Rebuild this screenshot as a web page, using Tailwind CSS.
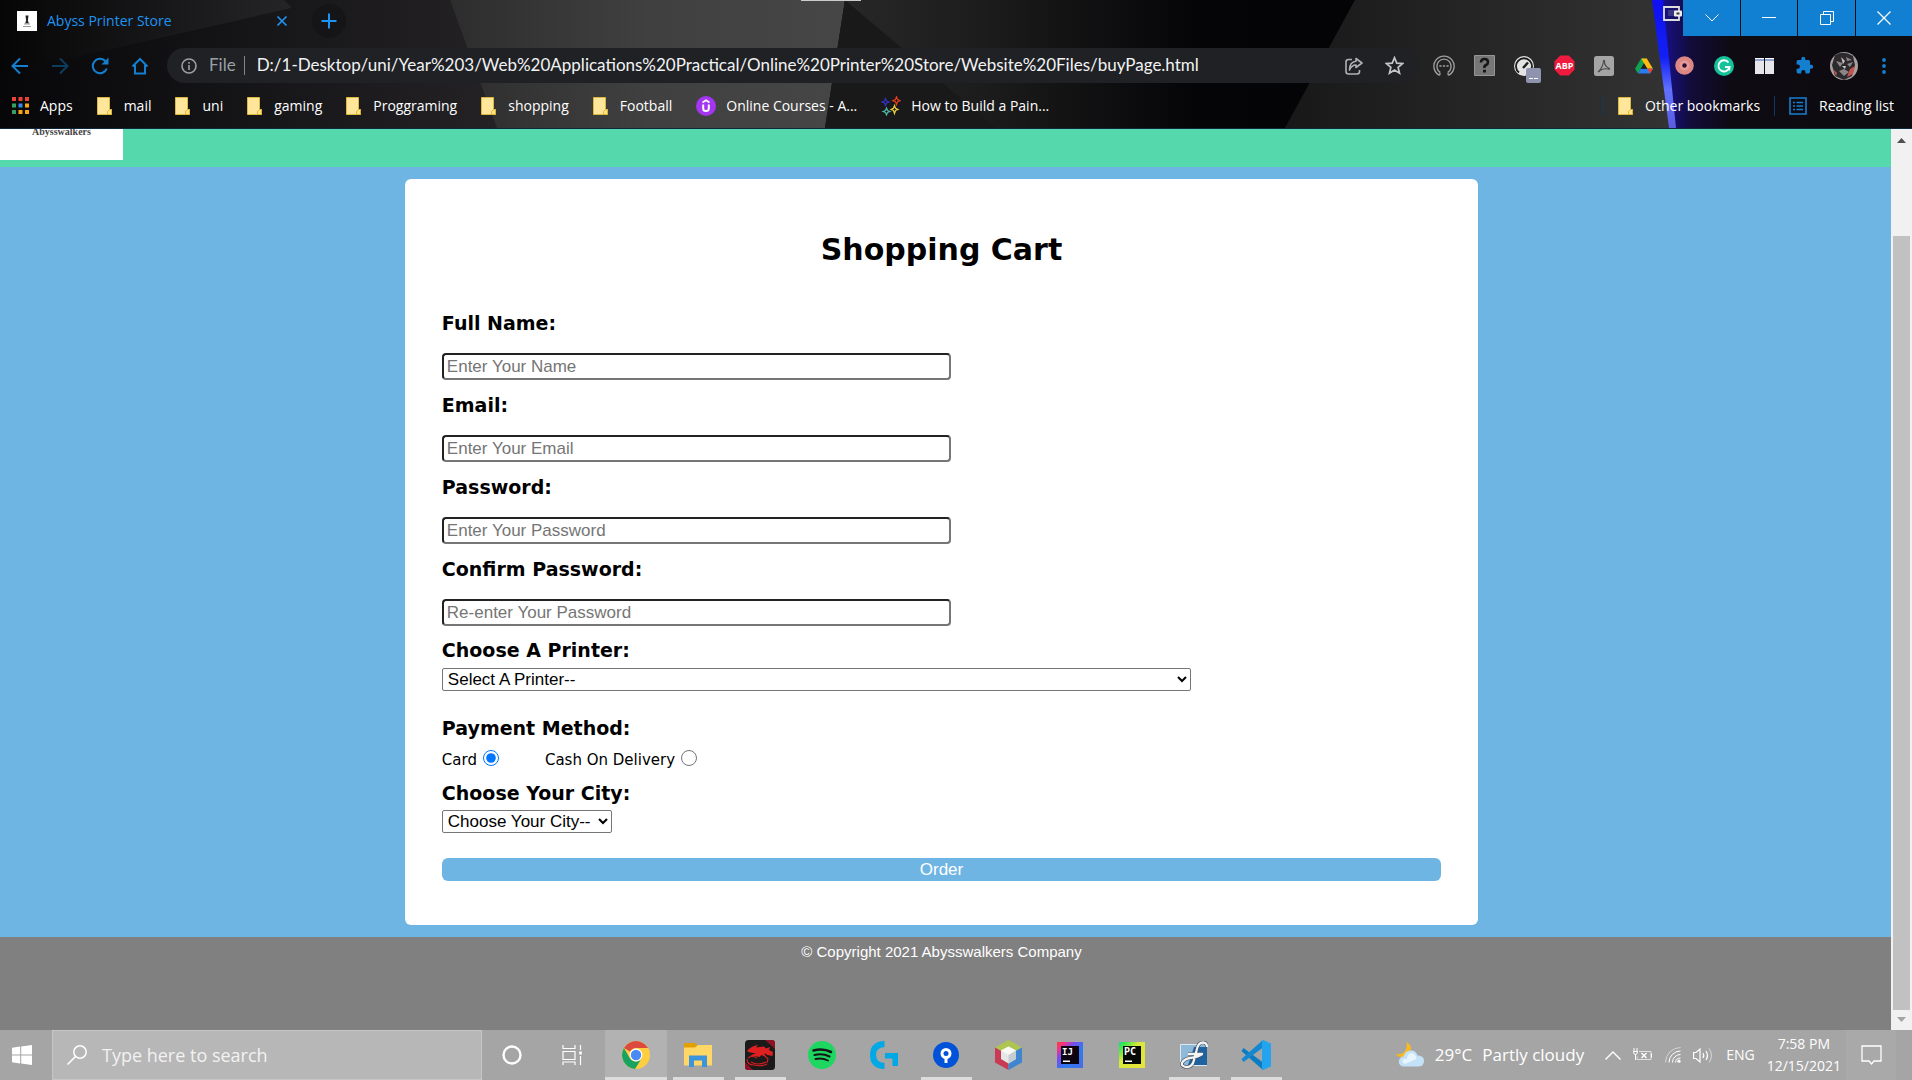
<!DOCTYPE html>
<html lang="en">
<head>
<meta charset="utf-8">
<title>Abyss Printer Store</title>
<script src="https://cdn.jsdelivr.net/npm/@tailwindcss/browser@4"></script>
</head>
<body class="flex min-h-screen flex-col bg-[#808080] font-['Open_Sans',sans-serif] text-sm text-white">

<svg class="hidden">
  <symbol id="folder" viewBox="0 0 15 18"><path d="M.5.5h12v12h2v5H.5z" fill="#ffe69a" stroke="#dcb93c"/><path d="M12.5 12.500l-2 2v3h4v-5z" fill="#ffe083" stroke="#d4ae2c" stroke-width=".8"/></symbol>
</svg>

<!-- Browser window frame -->
<header class="relative border-b border-[#0b2840] bg-[#070709]">
  <svg class="absolute inset-0 size-full" viewBox="0 0 1912 128" preserveAspectRatio="none" aria-hidden="true">
    <defs>
      <linearGradient id="g1"><stop offset="0" stop-color="#060607"/><stop offset="1" stop-color="#252527"/></linearGradient>
      <linearGradient id="g2"><stop offset="0" stop-color="#070709"/><stop offset="1" stop-color="#242225"/></linearGradient>
      <linearGradient id="g3"><stop offset="0" stop-color="#2d2d2e"/><stop offset=".5" stop-color="#404040"/><stop offset="1" stop-color="#464646"/></linearGradient>
      <linearGradient id="g4"><stop offset="0" stop-color="#292929"/><stop offset=".3" stop-color="#1c1c1c"/><stop offset=".7" stop-color="#050407"/><stop offset="1" stop-color="#040306"/></linearGradient>
      <linearGradient id="g5"><stop offset="0" stop-color="#181818"/><stop offset="1" stop-color="#333333"/></linearGradient>
      <linearGradient id="g6"><stop offset="0" stop-color="#1a12a0"/><stop offset=".14" stop-color="#120c3a"/><stop offset=".3" stop-color="#0e0b12"/><stop offset="1" stop-color="#0c0b0f"/></linearGradient>
      <linearGradient id="g7" x2="0" y2="1"><stop offset="0" stop-color="#1010f0"/><stop offset=".45" stop-color="#1220f4"/><stop offset=".7" stop-color="#6070ff"/><stop offset="1" stop-color="#5a5ce0"/></linearGradient>
    </defs>
    <path d="M0 72L292 8L278 0H450L500 128H0z" fill="url(#g2)"/>
    <path d="M0 0H284L292 8L0 74z" fill="url(#g1)"/>
    <path d="M450 0H845L825 128H497z" fill="url(#g3)"/>
    <path d="M845 0H1355L1285 128H825z" fill="url(#g4)"/>
    <path d="M845 0L996 128H825z" fill="#191919"/>
    <path d="M1355 0H1660L1672 128H1285z" fill="url(#g5)"/>
    <path d="M1655 0H1912V128H1672z" fill="url(#g6)"/>
    <path d="M1652 0H1663L1676 128H1669z" fill="url(#g7)"/>
    <path d="M801 0h60v1h-60z" fill="#c8cdcb"/>
  </svg>

  <div class="relative flex h-11 items-start">
    <div class="flex h-[42px] w-[302px] items-center pl-[17px]">
      <svg class="size-5" viewBox="0 0 20 20"><path d="M0 0h20v20H0z" fill="#fff"/><path d="M8.500 4.500h3l-.6 5 1 3H8.100l1-3z" fill="#222"/><path d="M7 13h6M6 15.500h8" stroke="#999"/></svg>
      <span class="ml-2.5 flex-1 text-[#1d94f3]">Abyss Printer Store</span>
      <button class="mr-3 p-0.5" aria-label="Close tab"><svg class="size-3" viewBox="0 0 12 12" stroke="#1d94f3" stroke-width="1.700"><path d="M1.500 1.500l9 9M10.500 1.500l-9 9"/></svg></button>
    </div>
    <button class="mt-1 ml-2.5 flex size-[34px] items-center justify-center rounded-full bg-[#151518]" aria-label="New tab"><svg class="size-4" viewBox="0 0 16 16" stroke="#1d94f3" stroke-width="2"><path d="M8 0.500v15M.5 8h15"/></svg></button>
    <svg class="ml-auto mt-1.5 h-4 w-5" viewBox="0 0 20 16" fill="none"><path d="M1 1h15v13H1z" stroke="#ddd" stroke-width="1.800"/><path d="M5 4h9v6H5z" fill="#3a3580"/><rect x="11" y="4.500" width="8" height="6" rx="1" fill="#eee"/><path d="M13.500 6.500h3v2h-3z" fill="#333"/></svg>
    <div class="flex h-9 gap-px">
      <button class="flex w-[57px] items-center justify-center bg-[#1280d2]" aria-label="Tab search"><svg class="h-2 w-[14px]" viewBox="0 0 14 8" fill="none" stroke="#fff"><path d="M.5.5L7 7l6.500-6.500"/></svg></button>
      <button class="flex w-14 items-center justify-center bg-[#1280d2]" aria-label="Minimize"><svg class="h-1 w-[14px]" viewBox="0 0 14 4"><path d="M0 1h14v1H0z" fill="#fff"/></svg></button>
      <button class="flex w-[57px] items-center justify-center bg-[#1280d2]" aria-label="Restore"><svg class="size-[14px]" viewBox="0 0 14 14" fill="none" stroke="#fff"><path d="M.5 3.500h10v10H.5zM3.500 3V.5h10v10H11"/></svg></button>
      <button class="flex w-14 items-center justify-center bg-[#1280d2]" aria-label="Close window"><svg class="size-[14px]" viewBox="0 0 14 14" stroke="#fff" stroke-width="1.200"><path d="M.5.5l13 13M13.500.5l-13 13"/></svg></button>
    </div>
  </div>

  <div class="relative flex h-[43px] items-center pr-2">
    <nav class="flex" aria-label="Browser">
      <button class="flex w-10 justify-center" aria-label="Back"><svg class="size-[18px]" viewBox="0 0 18 18" fill="none" stroke="#147fd0" stroke-width="2"><path d="M17 9H2M9 1.500L1.500 9 9 16.500"/></svg></button>
      <button class="flex w-10 justify-center" aria-label="Forward"><svg class="size-[18px]" viewBox="0 0 18 18" fill="none" stroke="#0d3c61" stroke-width="2"><path d="M1 9h15M9 1.500L16.500 9 9 16.500"/></svg></button>
      <button class="flex w-10 justify-center" aria-label="Reload"><svg class="size-[18px]" viewBox="0 0 18 18" fill="none" stroke="#147fd0" stroke-width="2"><path d="M15.800 11.500A7.200 7.200 0 1 1 14 3.800l2 2"/><path d="M17.500.5v7h-7z" fill="#147fd0" stroke="none"/></svg></button>
      <button class="flex w-10 justify-center" aria-label="Home"><svg class="size-[18px]" viewBox="0 0 18 18" fill="none" stroke="#147fd0" stroke-width="2"><path d="M1.500 9.500L9 2l7.500 7.500M4 8v8.500h10V8"/></svg></button>
    </nav>
    <div class="ml-[7px] mr-1.5 flex h-[35px] flex-1 items-center rounded-full bg-[#202124] pl-3.5">
      <svg class="size-4" viewBox="0 0 16 16" fill="none" stroke="#9aa0a6" stroke-width="1.600"><circle cx="8" cy="8" r="7"/><path d="M8 7v5M8 4v1.800"/></svg>
      <span class="ml-3 font-['Lato',sans-serif] text-[17px] text-[#9aa0a6]">File</span>
      <span class="ml-2 h-[19px] w-px bg-[#80868b]"></span>
      <input class="ml-3 flex-1 bg-transparent font-['Lato',sans-serif] text-[17px] text-[#f1f3f4] outline-none" aria-label="Address" value="D:/1-Desktop/uni/Year%203/Web%20Applications%20Practical/Online%20Printer%20Store/Website%20Files/buyPage.html">
      <button class="flex w-10 justify-center" aria-label="Share"><svg class="size-[18px]" viewBox="0 0 18 18" fill="none" stroke="#aeb2b6" stroke-width="1.600" stroke-linejoin="round"><path d="M7 2.500H3.500Q1 2.500 1 5v9.500Q1 17 3.500 17h8.500q2.500 0 2.500-2.500V13"/><path d="M11 1.500l6 4.500-6 4.500V8Q6.500 8 4.500 13 4.500 5 11 4.200z"/></svg></button>
      <button class="mr-1 flex w-10 justify-center" aria-label="Bookmark"><svg class="size-[19px]" viewBox="0 0 20 20" fill="none" stroke="#c3c6c9" stroke-width="1.800"><path d="M10 1.800l2.400 5.700 6.100.5-4.700 4 1.500 6.100L10 14.800l-5.300 3.300L6.200 12 1.500 8l6.100-.5z"/></svg></button>
    </div>
    <div class="flex items-center">
      <button class="flex w-10 justify-center" aria-label="Recorder"><svg class="size-[22px]" viewBox="0 0 20 20" fill="none" stroke="#a0a0a0" stroke-width="1.200"><path d="M6 18.500A9.200 9.200 0 1 1 14 18.500"/><path d="M6.500 16l-.5 2.500M13.500 16l.5 2.500M6.500 15.800a6.500 6.500 0 1 1 7 0"/><path d="M5.800 10h2M9 10h2M12.200 10h2"/></svg></button>
      <button class="flex w-10 justify-center" aria-label="Unknown extension"><svg class="size-[21px]" viewBox="0 0 21 21"><path d="M.5.5h20v20H.5z" fill="#777" stroke="#959595"/><path d="M7 7.500Q7 4 10.500 4T14 7.200Q14 9 12 10t-1.500 3" fill="none" stroke="#161616" stroke-width="2.600"/><path d="M9 14.800h3v2.700H9z" fill="#161616"/></svg></button>
      <button class="relative flex w-10 justify-center" aria-label="Speed test"><svg class="size-5" viewBox="0 0 20 20"><circle cx="10" cy="10" r="10" fill="#e4e4e4"/><path d="M5 16.500a8 8 0 1 1 10 0" fill="none" stroke="#1c1c1c" stroke-width="1.800"/><path d="M9 12l5-5.500" stroke="#1c1c1c" stroke-width="2.400"/></svg><span class="absolute top-3 left-[22px] flex h-[15px] w-[15px] items-end justify-center gap-px rounded-xs bg-[#8f93ad] pb-1"><i class="h-px w-1 bg-white"></i><i class="h-px w-1 bg-white"></i></span></button>
      <button class="flex w-10 justify-center" aria-label="Adblock Plus"><svg class="size-[21px]" viewBox="0 0 21 21"><path d="M6.200.5h8.600l5.700 5.700v8.600l-5.700 5.700H6.200L.5 14.800V6.200z" fill="#ee1b3f"/><text x="10.500" y="14" text-anchor="middle" font-family="Open Sans" font-weight="700" font-size="9" fill="#fff">ABP</text></svg></button>
      <button class="flex w-10 justify-center" aria-label="Acrobat"><svg class="size-5" viewBox="0 0 20 20"><rect width="20" height="20" rx="2.500" fill="#a5a5a5"/><path d="M4.500 15.500Q9 11 9.500 5q.5-1.500 1 0Q10 10 15.500 12.500q.5 1-1.500.5-5-1-8 1.500-1 1.500-1.500 1z" fill="none" stroke="#4a4a4a" stroke-width="1.100"/></svg></button>
      <button class="flex w-10 justify-center" aria-label="Google Drive"><svg class="size-[18px]" viewBox="0 0 18 16"><path d="M6.200.5h5.600L6 10.500l-3 5L0 10.700z" fill="#12a350"/><path d="M6.200.5h5.600L18 10.700h-5.700z" fill="#ffbc10"/><path d="M5.800 10.700H18L15 15.500H3z" fill="#2a7cf0"/><path d="M9 5.500l3.200 5.200H5.900z" fill="#202024"/><path d="M12.300 10.700H18L15 15.500z" fill="#e94335"/></svg></button>
      <button class="flex w-10 justify-center" aria-label="Screen recorder"><svg class="size-[19px]" viewBox="0 0 19 19"><circle cx="9.500" cy="9.500" r="9.300" fill="#dd8785"/><circle cx="9.500" cy="9.500" r="5" fill="#e89a98"/><circle cx="9.500" cy="9.500" r="2.200" fill="#2a1030"/></svg></button>
      <button class="flex w-10 justify-center" aria-label="Grammarly"><svg class="size-5" viewBox="0 0 20 20" fill="none"><circle cx="10" cy="10" r="10" fill="#14c39a"/><path d="M14.500 6.500A5.600 5.600 0 1 0 15.500 11H11" stroke="#fff" stroke-width="1.800"/><path d="M13 11.500h2.500v3" stroke="#fff" stroke-width="1.500"/></svg></button>
      <button class="flex w-10 justify-center" aria-label="Tab split"><svg class="h-4 w-[19px]" viewBox="0 0 19 16"><path d="M0 0h9v16H0zM10 0h9v16h-9z" fill="#e6e6ea"/><path d="M0 0h9v3H0zM10 0h9v3h-9z" fill="#8fa3cf"/><path d="M0 0h9v1H0zM10 0h9v1h-9z" fill="#fff"/></svg></button>
      <button class="flex w-10 justify-center" aria-label="Extensions"><svg class="size-[19px]" viewBox="0 0 24 24" fill="#147fd0"><path d="M20.500 11H19V7a2 2 0 0 0-2-2h-4V3.500a2.500 2.500 0 0 0-5 0V5H4a2 2 0 0 0-2 2v3.800h1.500a2.700 2.700 0 0 1 0 5.400H2V20a2 2 0 0 0 2 2h3.800v-1.500a2.700 2.700 0 0 1 5.400 0V22H17a2 2 0 0 0 2-2v-4h1.500a2.500 2.500 0 0 0 0-5z"/></svg></button>
      <button class="flex w-10 justify-center" aria-label="Profile"><svg class="size-7" viewBox="0 0 28 28"><defs><clipPath id="av"><circle cx="14" cy="14" r="14"/></clipPath></defs><g clip-path="url(#av)"><path d="M0 0h28v28H0z" fill="#a9a19f"/><path d="M5 3q9-5 18 1l2 9-3 11-8 4-9-4-3-11z" fill="#2b2a2e"/><path d="M6 9l7 2-3 4zM16 5l6 3-5 1zM17 12l6-2-3 5zM9 19l5-2 5 3-5 4z" fill="#8d8685"/><path d="M11 5l4 4-2 3zM12 14l4 0-1 3z" fill="#c9c3c0"/><path d="M20 17l5-3-2 8-6 3zM3 17l4 4-1 3z" fill="#c5534f"/></g></svg></button>
      <button class="flex w-10 justify-center" aria-label="Menu"><svg class="h-4 w-1" viewBox="0 0 4 16" fill="#147fd0"><circle cx="2" cy="2" r="1.900"/><circle cx="2" cy="8" r="1.900"/><circle cx="2" cy="14" r="1.900"/></svg></button>
    </div>
  </div>

  <nav class="relative flex h-[41px] items-center pr-[18px] pb-1 pl-3" aria-label="Bookmarks">
    <div class="flex flex-1 items-center gap-6">
      <a href="#" class="flex items-center gap-[11px]"><svg class="size-[17px]" viewBox="0 0 17 17"><path d="M0 0h4v4H0zM6.500 0h4v4h-4zM13 0h4v4h-4z" fill="#ea4335"/><path d="M0 6.500h4v4H0zM0 13h4v4H0z" fill="#34a162"/><path d="M6.500 6.500h4v4h-4z" fill="#2d8cf0"/><path d="M13 6.500h4v4h-4zM6.500 13h4v4h-4zM13 13h4v4h-4z" fill="#f9a510"/></svg>Apps</a>
      <a href="#" class="flex items-center gap-3"><svg class="h-[18px] w-[15px]"><use href="#folder"/></svg>mail</a>
      <a href="#" class="flex items-center gap-3"><svg class="h-[18px] w-[15px]"><use href="#folder"/></svg>uni</a>
      <a href="#" class="flex items-center gap-3"><svg class="h-[18px] w-[15px]"><use href="#folder"/></svg>gaming</a>
      <a href="#" class="flex items-center gap-3"><svg class="h-[18px] w-[15px]"><use href="#folder"/></svg>Proggraming</a>
      <a href="#" class="flex items-center gap-3"><svg class="h-[18px] w-[15px]"><use href="#folder"/></svg>shopping</a>
      <a href="#" class="flex items-center gap-3"><svg class="h-[18px] w-[15px]"><use href="#folder"/></svg>Football</a>
      <a href="#" class="flex items-center gap-2.5"><svg class="size-5" viewBox="0 0 20 20" fill="none" stroke="#fff"><circle cx="10" cy="10" r="10" fill="#a435f0" stroke="none"/><path d="M7.200 8.500v4q0 2.500 2.800 2.500t2.800-2.500v-4" stroke-width="2"/><path d="M6.500 6.500L10 4.200l3.500 2.300" stroke-width="1.700"/></svg>Online Courses - A...</a>
      <a href="#" class="flex items-center gap-2.5"><svg class="size-5" viewBox="0 0 20 20" fill="none" stroke-width="1.200"><path d="M4.500 2.500l1 2.500 2.500 1-2.500 1-1 2.500-1-2.500L1 6l2.500-1z" stroke="#3430c8"/><path d="M15.500.8l1 2.700 2.700 1.200-2.700 1-1 3-1-3-2.700-1 2.700-1.200z" stroke="#e8401c"/><path d="M5.500 12l1 2.500L9 15.500l-2.500 1-1 2.500-1-2.500-2.500-1 2.500-1z" stroke="#4fb5a5"/><path d="M13.500 9.500l1 2.800 2.500 1.200-2.500 1-1 3-1-3-2.500-1 2.500-1.200z" stroke="#f0cf3c"/></svg>How to Build a Pain...</a>
    </div>
    <a href="#" class="flex items-center gap-3 border-l border-[#123a5c] pl-[15px]"><svg class="h-[18px] w-[15px]"><use href="#folder"/></svg>Other bookmarks</a>
    <a href="#" class="ml-3.5 flex items-center gap-3 border-l border-[#123a5c] pl-3.5"><svg class="size-[18px]" viewBox="0 0 18 18" fill="none" stroke="#147fd0" stroke-width="1.600"><path d="M1 1h16v16H1z"/><path d="M4 5.500h2M7.500 5.500H14M4 9h2M7.500 9H14M4 12.500h2M7.500 12.500H14"/></svg>Reading list</a>
  </nav>
</header>

<!-- Page viewport with its scrollbar -->
<div class="flex flex-1">
  <div class="flex flex-1 flex-col font-['Liberation_Sans',Arial,sans-serif]">
    <div class="h-[38px] bg-[#55d8ab]">
      <a href="#" class="block h-[31px] w-[123px] bg-white text-center font-['Liberation_Serif',serif] text-[10px] leading-[6px] font-bold text-[#444]">Abysswalkers</a>
    </div>
    <main class="bg-[#6fb5e4] py-3 pr-2">
      <form class="mx-auto flex w-[57%] flex-col rounded-md bg-white px-[37px] pt-[51px] pb-11 font-['DejaVu_Sans',Verdana,sans-serif] text-black">
        <h1 class="text-center text-[30px] leading-10 font-bold">Shopping Cart</h1>
        <label for="name" class="mt-[41px] text-[19px] leading-6 font-bold">Full Name:</label>
        <input id="name" type="text" placeholder="Enter Your Name" class="mt-[18px] h-[27px] w-[51%] rounded-sm border-2 border-t-[#222] border-r-[#767676] border-b-[#767676] border-l-[#222] px-[3px] font-['Liberation_Sans',Arial,sans-serif] text-[17px] placeholder:text-[#757575]">
        <label for="email" class="mt-[13px] text-[19px] leading-6 font-bold">Email:</label>
        <input id="email" type="email" placeholder="Enter Your Email" class="mt-[18px] h-[27px] w-[51%] rounded-sm border-2 border-t-[#222] border-r-[#767676] border-b-[#767676] border-l-[#222] px-[3px] font-['Liberation_Sans',Arial,sans-serif] text-[17px] placeholder:text-[#757575]">
        <label for="pass" class="mt-[13px] text-[19px] leading-6 font-bold">Password:</label>
        <input id="pass" type="password" placeholder="Enter Your Password" class="mt-[18px] h-[27px] w-[51%] rounded-sm border-2 border-t-[#222] border-r-[#767676] border-b-[#767676] border-l-[#222] px-[3px] font-['Liberation_Sans',Arial,sans-serif] text-[17px] placeholder:text-[#757575]">
        <label for="confirm" class="mt-[13px] text-[19px] leading-6 font-bold">Confirm Password:</label>
        <input id="confirm" type="password" placeholder="Re-enter Your Password" class="mt-[18px] h-[27px] w-[51%] rounded-sm border-2 border-t-[#222] border-r-[#767676] border-b-[#767676] border-l-[#222] px-[3px] font-['Liberation_Sans',Arial,sans-serif] text-[17px] placeholder:text-[#757575]">
        <label for="printer" class="mt-3 text-[19px] leading-6 font-bold">Choose A Printer:</label>
        <select id="printer" class="mt-1.5 h-[23px] w-3/4 rounded-xs border border-[#767676] bg-white px-px font-['Liberation_Sans',Arial,sans-serif] text-[17px] leading-5"><option>Select A Printer--</option></select>
        <fieldset class="mt-[25px]">
          <legend class="text-[19px] leading-6 font-bold">Payment Method:</legend>
          <div class="flex h-[41px] items-center gap-[46px] text-[15px]">
            <label class="flex items-center gap-1.5">Card <input type="radio" name="pay" checked class="mb-1.5 size-4"></label>
            <label class="flex items-center gap-1.5">Cash On Delivery <input type="radio" name="pay" class="mb-1.5 size-4"></label>
          </div>
        </fieldset>
        <label for="city" class="text-[19px] leading-6 font-bold">Choose Your City:</label>
        <select id="city" class="mt-[5px] h-[23px] w-[17%] rounded-xs border border-[#767676] bg-white pl-px font-['Liberation_Sans',Arial,sans-serif] text-[17px] leading-5"><option>Choose Your City--</option></select>
        <button type="button" class="mt-[25px] h-[23px] rounded-md bg-[#6fb5e4] font-['Liberation_Sans',Arial,sans-serif] text-[17px] leading-[23px] text-white">Order</button>
      </form>
    </main>
    <footer class="flex-1 bg-[#808080] pt-1 pr-2 text-center text-[15px] leading-[22px]">© Copyright 2021 Abysswalkers Company</footer>
  </div>
  <div class="flex w-[21px] flex-col items-center bg-[#f1f1f1]" aria-hidden="true">
    <svg class="mt-[9px] mb-[93px] h-[5px] w-[9px]" viewBox="0 0 9 5"><path d="M4.500 0L9 5H0z" fill="#505050"/></svg>
    <div class="w-[17px] flex-1 bg-[#c1c1c1]"></div>
    <svg class="mt-[7px] mb-2 h-[5px] w-[9px]" viewBox="0 0 9 5"><path d="M0 0h9L4.500 5z" fill="#a3a3a3"/></svg>
  </div>
</div>

<!-- Windows taskbar -->
<footer class="flex h-[50px] items-stretch bg-[#a5a5a5]">
  <button class="flex w-[52px] items-center pl-3" aria-label="Start"><svg class="size-5" viewBox="0 0 20 20" fill="#fff"><path d="M0 2.800L8.200 1.600v7.900H0zM9.200 1.500L20 0v9.500H9.200zM0 10.500h8.200v7.900L0 17.200zM9.200 10.500H20V20L9.200 18.500z"/></svg></button>
  <label class="flex w-[430px] items-center border border-[#c6c6c6] bg-[#b7b7b7] pl-3.5">
    <svg class="size-5" viewBox="0 0 20 20" fill="none" stroke="#fff" stroke-width="1.500"><circle cx="13" cy="7" r="6.200"/><path d="M8.600 11.400L.5 19.500"/></svg>
    <input type="text" aria-label="Search" placeholder="Type here to search" class="ml-[15px] flex-1 bg-transparent text-lg outline-none placeholder:text-[#f2f2f2]">
  </label>
  <button class="flex w-[60px] items-center justify-center" aria-label="Cortana"><svg class="size-5" viewBox="0 0 20 20" fill="none" stroke="#fff" stroke-width="2.400"><circle cx="10" cy="10" r="8.500"/></svg></button>
  <button class="flex w-[63px] items-center justify-center pr-1" aria-label="Task view"><svg class="size-5" viewBox="0 0 20 20" fill="none" stroke="#fff" stroke-width="1.200"><path d="M1 0v3.500h12V0M1 6.500h12v8H1zM1 20v-3h12v3M18.500 0v5M18.500 11v9"/><path d="M17.200 6.500h2.600v3h-2.600z" fill="#fff" stroke="none"/></svg></button>
  <button class="flex w-[62px] items-center justify-center border-b-[3px] border-[#dcdcdc] bg-[#b2b2b2] pt-[3px]" aria-label="Chrome"><svg class="size-7" viewBox="0 0 28 28"><circle cx="14" cy="14" r="14" fill="#ffcd40"/><path d="M1.900 7a14 14 0 0 1 24.200 0H14a7 7 0 0 0-6 3.500z" fill="#dc4a3f"/><path d="M1.900 7A14 14 0 0 0 13 28l6.500-10.500A7 7 0 0 1 8 17.500z" fill="#1aa260"/><circle cx="14" cy="14" r="6.400" fill="#fff"/><circle cx="14" cy="14" r="5.200" fill="#4a8af4"/></svg></button>
  <button class="flex w-[62px] justify-center" aria-label="File Explorer"><span class="flex w-[51px] items-center justify-center border-b-[3px] border-[#dcdcdc] pt-[3px]"><svg class="h-6 w-7" viewBox="0 0 28 24"><path d="M0 0h11l2 2v4H0z" fill="#e2a000"/><path d="M0 4.500h11L14 2h14v20.500H0z" fill="#ffd766"/><path d="M5 24V12.500h18V24h-5v-6.500h-8V24z" fill="#3b94dc"/></svg></span></button>
  <button class="flex w-[62px] justify-center" aria-label="Dragon Center"><span class="flex w-[51px] items-center justify-center border-b-[3px] border-[#dcdcdc] pt-[3px]"><svg class="size-[30px]" viewBox="0 0 30 30"><rect width="30" height="30" rx="3.500" fill="#1a1a1b"/><path d="M20 0h7q3 0 3 3v6zM0 22l8 8H3q-3 0-3-3z" fill="#8d1226"/><path d="M2 11q4-5 11-6l-2 2.500 8-1 2 2 4-1.500-1 3 4 2-.5 4-5-1-3-2 1 4-4-2-2 2q-6-1.500-11 .5 4-4 8-4l-6-1q-2-.5-3.500-1.500z" fill="#e02020"/><path d="M2 19q0 6 7 6M3 18q4-3 9 0M6 22q7 4 15 0M9 25q7 2 13-1M20 16l3 3-1 4" fill="none" stroke="#d81e1e" stroke-width="1.100"/></svg></span></button>
  <button class="flex w-[62px] items-center justify-center" aria-label="Spotify"><svg class="size-7" viewBox="0 0 28 28" fill="none" stroke="#151515" stroke-linecap="round"><circle cx="14" cy="14" r="14" fill="#1ed760" stroke="none"/><path d="M5.500 9.500q9.500-2.500 17.500 1.500" stroke-width="2.600"/><path d="M6.500 14q8-2 15 1.500" stroke-width="2.200"/><path d="M7.500 18q6.500-1.500 12.500 1.500" stroke-width="1.800"/></svg></button>
  <button class="flex w-[62px] items-center justify-center" aria-label="Logitech G HUB"><svg class="size-7" viewBox="0 0 28 28"><path d="M14.500 0v6q-8.500.5-8.500 8t8.500 8v6Q0 27.500 0 14T14.500 0zM15 12h13v13h-5.500v-7.500H15z" fill="#00a8e6"/></svg></button>
  <button class="flex w-[62px] justify-center" aria-label="Sourcetree"><span class="flex w-[51px] items-center justify-center border-b-[3px] border-[#dcdcdc] pt-[3px]"><svg class="size-[26px]" viewBox="0 0 26 26"><circle cx="13" cy="13" r="13" fill="#0052d8"/><circle cx="13" cy="11.500" r="4" fill="none" stroke="#fff" stroke-width="3"/><path d="M11.500 16h3v5h-3z" fill="#fff"/></svg></span></button>
  <button class="flex w-[62px] items-center justify-center" aria-label="NetBeans"><svg class="h-[30px] w-[27px]" viewBox="0 0 27 30"><path d="M13.500 0L27 7.500 13.500 15 0 7.500z" fill="#aec650"/><path d="M0 7.500L13.500 15v15L0 22.500z" fill="#c93a55"/><path d="M27 7.500L13.500 15v15L27 22.500z" fill="#3f86d0"/><path d="M13.500 6.500l7.500 4v8.500l-7.500 4.500L6 19v-8.500z" fill="#e4e8e4"/><path d="M13.500 6.500l7.500 4-7.500 4.500L6 10.500z" fill="#fafaf4"/><path d="M13.500 15v8.500L21 19v-8.500z" fill="#c5ccd2"/></svg></button>
  <button class="flex w-[62px] items-center justify-center" aria-label="IntelliJ IDEA"><svg class="size-[26px]" viewBox="0 0 26 26"><defs><linearGradient id="ij" x2="1" y2="1"><stop offset="0" stop-color="#fc3f3a"/><stop offset=".15" stop-color="#f8327e"/><stop offset=".35" stop-color="#7a4cf0"/><stop offset=".6" stop-color="#2d7cf0"/><stop offset="1" stop-color="#4a6ae8"/></linearGradient></defs><path d="M0 0h26v26H0z" fill="url(#ij)"/><path d="M4 4h18v18H4z" fill="#0c0410"/><text x="5" y="13" font-family="DejaVu Sans Mono" font-weight="700" font-size="9" fill="#fff">IJ</text><path d="M6 18.500h7V20H6z" fill="#fff"/></svg></button>
  <button class="flex w-[62px] items-center justify-center" aria-label="PyCharm"><svg class="size-[26px]" viewBox="0 0 26 26"><defs><linearGradient id="pc" x2="1" y2="1"><stop offset="0" stop-color="#21d789"/><stop offset=".15" stop-color="#3ee84a"/><stop offset=".4" stop-color="#d8e83c"/><stop offset="1" stop-color="#e8e43a"/></linearGradient></defs><path d="M0 0h26v26H0z" fill="url(#pc)"/><path d="M4 4h18v18H4z" fill="#060a06"/><text x="5" y="13" font-family="DejaVu Sans Mono" font-weight="700" font-size="10" fill="#fff">PC</text><path d="M6 18.500h7V20H6z" fill="#fff"/></svg></button>
  <button class="flex w-[62px] justify-center" aria-label="Font viewer"><span class="flex w-[51px] items-center justify-center border-b-[3px] border-[#dcdcdc] pt-[3px]"><svg class="size-7" viewBox="0 0 28 28" fill="none"><path d="M.5 3.500h26v21H.5z" fill="#8fb9d8" stroke="#dce8f0"/><path d="M14 6h13v18H8z" fill="#1f62a0"/><path d="M27 6Q27 1.500 23 1.500q-5 0-6.500 8L14 19q-1.500 7.500-8 7-5-1-4-4 2-4 8-5 8-1 12-4M8 13h15" stroke="#3c4a58" stroke-width="3.600"/><path d="M27 6Q27 1.500 23 1.500q-5 0-6.500 8L14 19q-1.500 7.500-8 7-5-1-4-4 2-4 8-5 8-1 12-4M8 13h15" stroke="#f4f4f4" stroke-width="2.300"/></svg></span></button>
  <button class="flex w-[62px] justify-center" aria-label="Visual Studio Code"><span class="flex w-[51px] items-center justify-center border-b-[3px] border-[#dcdcdc] pt-[3px]"><svg class="size-[30px]" viewBox="0 0 30 30"><path d="M2.500 8L22 22.500V30L.5 11z" fill="#0a7cc4"/><path d="M2.500 22L22 7.500V0L.5 19z" fill="#1388d0"/><path d="M22 0l8 3.500v23L22 30l-1-1V1z" fill="#23a4ee"/></svg></span></button>

  <div class="ml-auto flex items-center pr-4">
    <svg class="h-[26px] w-7" viewBox="0 0 28 26"><path d="M10.500 0q4 2 4.500 6.500l-2 6.500-7 2Q1 15 0 12q6 1 9-3 2.500-4 1.500-9z" fill="#fbb91e"/><path d="M8 24.500a5 5 0 0 1-.5-10Q9 8.500 15 8.500q5 0 6.500 5Q28 13.500 28 19t-6 5.500z" fill="#c3e2f7"/><path d="M9 22q-3.500-1-2-4.500 2-1.500 4 0Q11 11 16 11q4 1 4.500 6" fill="#e8f5fd"/></svg>
    <span class="ml-[11px] text-[17px]">29°C</span>
    <span class="ml-2.5 text-[17px]">Partly cloudy</span>
    <button class="ml-[21px] flex" aria-label="Hidden icons"><svg class="h-[9px] w-4" viewBox="0 0 16 9" fill="none" stroke="#fff" stroke-width="1.400"><path d="M.5 8.500L8 1l7.500 7.500"/></svg></button>
    <svg class="ml-3 h-3.5 w-5" viewBox="0 0 20 14" fill="none" stroke="#fff"><path d="M6 3.500h12v8H4v-3" stroke="#e0e0e0"/><path d="M18.500 5.500v4" /><path d="M8.500 5l5 5M13.500 5l-5 5" stroke-width="1.400"/><path d="M1 0v3.500M4 0v3.500M.5 3.500h4q0 3-2 3t-2-3zM2.500 6v6"/></svg>
    <svg class="ml-3 size-4" viewBox="0 0 16 16" fill="none" stroke="#fff"><path d="M.5 15.500A15 15 0 0 1 15.500.5" stroke="#d4d4d4"/><path d="M4 15.500A11.500 11.500 0 0 1 15.500 4M7.500 15.500a8 8 0 0 1 8-8M10.500 15.500a5 5 0 0 1 5-4.500"/><circle cx="14" cy="14.200" r="1.600" fill="#fff" stroke="none"/></svg>
    <svg class="ml-3 h-[17px] w-5" viewBox="0 0 20 17" fill="none" stroke="#fff" stroke-width="1.200"><path d="M.6 5.500H3L7 2v13l-4-3.500H.6z"/><path d="M10 6q1.500 2.500 0 5M13 4q3 4.500 0 9"/><path d="M16 1.500q5 7 0 14" stroke="#cfcfcf"/></svg>
    <span class="ml-[13px]">ENG</span>
    <div class="ml-3 pr-[5px] text-center leading-[22px]"><div>7:58 PM</div><div>12/15/2021</div></div>
    <button class="flex h-full w-[50px] items-center justify-center bg-[#a9a9a9]" aria-label="Notifications"><svg class="h-5 w-[21px]" viewBox="0 0 21 20" fill="none" stroke="#fff" stroke-width="1.300"><path d="M1 1h19v15h-7l-2.500 3L8 16H1z"/></svg></button>
  </div>
</footer>
</body>
</html>
